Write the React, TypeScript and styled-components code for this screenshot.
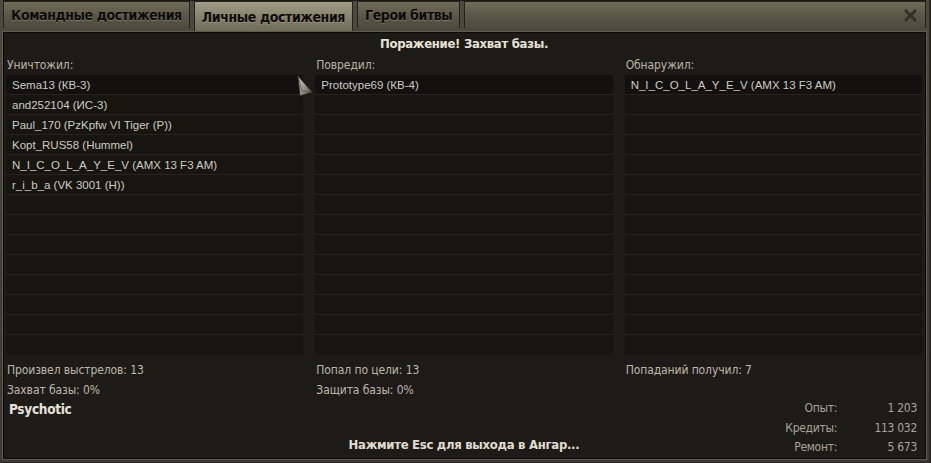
import styled, { createGlobalStyle } from "styled-components"

const GlobalStyle = createGlobalStyle`
  html, body {
    margin: 0;
    padding: 0;
    background: #1a1814;
  }
  * {
    box-sizing: border-box;
  }
`

const narrow = `"Liberation Sans Narrow", "DejaVu Sans Condensed", "Roboto Condensed", "Liberation Sans", sans-serif`

interface Column {
  title: string
  rows: string[]
  stats: string[]
}

const columns: Column[] = [
  {
    title: "Уничтожил:",
    rows: [
      "Sema13 (КВ-3)",
      "and252104 (ИС-3)",
      "Paul_170 (PzKpfw VI Tiger (P))",
      "Kopt_RUS58 (Hummel)",
      "N_I_C_O_L_A_Y_E_V (AMX 13 F3 AM)",
      "r_i_b_a (VK 3001 (H))",
    ],
    stats: ["Произвел выстрелов: 13", "Захват базы: 0%"],
  },
  {
    title: "Повредил:",
    rows: ["Prototype69 (КВ-4)"],
    stats: ["Попал по цели: 13", "Защита базы: 0%"],
  },
  {
    title: "Обнаружил:",
    rows: ["N_I_C_O_L_A_Y_E_V (AMX 13 F3 AM)"],
    stats: ["Попаданий получил: 7"],
  },
]

const totals = [
  ["Опыт:", "1 203"],
  ["Кредиты:", "113 032"],
  ["Ремонт:", "5 673"],
]

const ROW_COUNT = 14

export default function App() {
  return (
    <>
      <GlobalStyle />
      <Window>
        <TabBar>
          <Tab>Командные достижения</Tab>
          <Tab active>Личные достижения</Tab>
          <Tab>Герои битвы</Tab>
          <TabFiller>
            <CloseButton>
              <svg width="13" height="13" viewBox="0 0 13 13">
                <path
                  d="M2 2 L11 11 M11 2 L2 11"
                  stroke="#33312a"
                  strokeWidth="3"
                  strokeLinecap="square"
                />
              </svg>
            </CloseButton>
          </TabFiller>
        </TabBar>

        <Panel>
          <Title>Поражение! Захват базы.</Title>

          <Columns>
            {columns.map((col) => (
              <ColumnLabel key={col.title}>{col.title}</ColumnLabel>
            ))}
            {columns.map((col) => (
              <List key={col.title + "-list"}>
                {Array.from({ length: ROW_COUNT }).map((_, i) => (
                  <Row key={i} first={i === 0}>
                    {col.rows[i] ?? ""}
                  </Row>
                ))}
              </List>
            ))}
            {columns.map((col) => (
              <Stats key={col.title + "-stats"}>
                {col.stats.map((s) => (
                  <StatLine key={s}>{s}</StatLine>
                ))}
              </Stats>
            ))}
          </Columns>

          <Footer>
            <PlayerName>Psychotic</PlayerName>
            <EscHint>Нажмите Esc для выхода в Ангар...</EscHint>
            <Totals>
              {totals.map(([label, value]) => (
                <TotalRow key={label}>
                  <TotalLabel>{label}</TotalLabel>
                  <TotalValue>{value}</TotalValue>
                </TotalRow>
              ))}
            </Totals>
          </Footer>

          <Cursor>
            <svg width="18" height="22" viewBox="0 0 18 22">
              <defs>
                <linearGradient id="cur" x1="0" y1="0" x2="1" y2="1">
                  <stop offset="0" stopColor="#d8d6cf" />
                  <stop offset="0.6" stopColor="#8b887f" />
                  <stop offset="1" stopColor="#4b4942" />
                </linearGradient>
              </defs>
              <path d="M2 1 L16 17 L4 21 Z" fill="url(#cur)" stroke="#2a2824" strokeWidth="0.8" />
              <path d="M2 1 L6 16 L16 17" fill="none" stroke="#5a5850" strokeWidth="0.8" />
            </svg>
          </Cursor>
        </Panel>
      </Window>
    </>
  )
}

const Window = styled.div`
  width: 931px;
  height: 463px;
  display: flex;
  flex-direction: column;
  padding: 0 3px 4px 3px;
  background: linear-gradient(180deg, #4d493e 0%, #413e35 60%, #3c3a32 100%);
  border-right: 2px solid #2a2823;
  border-bottom: 1px solid #2a2823;
`

const TabBar = styled.div`
  display: flex;
  height: 28px;
  gap: 4px;
  border-top: 1px solid #1c1a15;
`

const Tab = styled.div<{ active?: boolean }>`
  display: flex;
  align-items: center;
  padding: 0 7px;
  font-family: ${narrow};
  font-weight: bold;
  font-size: 14px;
  letter-spacing: -0.4px;
  color: #0d0c0a;
  text-shadow: 0 1px 0 rgba(200, 195, 170, 0.35);
  border: 1px solid #24221c;
  border-bottom: none;
  background: ${(p) =>
    p.active
      ? "linear-gradient(180deg, #a19c86 0%, #8a8571 45%, #6f6b5a 100%)"
      : "linear-gradient(180deg, #716b58 0%, #5c5848 50%, #4d4a3e 100%)"};
  height: ${(p) => (p.active ? "30px" : "27px")};
  margin-bottom: ${(p) => (p.active ? "-3px" : "0")};
  position: relative;
  z-index: ${(p) => (p.active ? 2 : 1)};
`

const TabFiller = styled.div`
  flex: 1;
  display: flex;
  justify-content: flex-end;
  align-items: center;
  padding-right: 6px;
  border: 1px solid #24221c;
  border-bottom: none;
  background: linear-gradient(180deg, #716b58 0%, #5c5848 50%, #4d4a3e 100%);
`

const CloseButton = styled.div`
  display: flex;
  align-items: center;
  justify-content: center;
  width: 18px;
  height: 18px;
`

const Panel = styled.div`
  position: relative;
  flex: 1;
  margin-top: 4px;
  padding: 0 3px 0 2px;
  background: #1d1b17;
  border: 1px solid #0b0a08;
  box-shadow: 0 0 0 1px #5f5b4e;
  display: flex;
  flex-direction: column;
`

const Title = styled.div`
  height: 22px;
  line-height: 22px;
  text-align: center;
  font-family: ${narrow};
  font-weight: bold;
  font-size: 13px;
  letter-spacing: -0.3px;
  color: #e6e2d6;
`

const Columns = styled.div`
  display: grid;
  grid-template-columns: repeat(3, 1fr);
  column-gap: 12px;
`

const ColumnLabel = styled.div`
  height: 20px;
  line-height: 20px;
  padding-left: 1px;
  font-family: ${narrow};
  font-size: 12px;
  letter-spacing: -0.1px;
  color: #b9b4a7;
`

const List = styled.div`
  display: flex;
  flex-direction: column;
  background: #15130f;
`

const Row = styled.div<{ first?: boolean }>`
  height: 20px;
  line-height: 20px;
  padding-left: 6px;
  font-family: "Liberation Sans", Arial, sans-serif;
  font-size: 11.5px;
  color: #cfcbc2;
  white-space: nowrap;
  background: ${(p) => (p.first ? "#121110" : "#17150f")};
  border-bottom: 1px solid #27241d;
  &:last-child {
    border-bottom: none;
  }
`

const Stats = styled.div`
  display: flex;
  flex-direction: column;
  padding-top: 5px;
`

const StatLine = styled.div`
  height: 20px;
  line-height: 20px;
  padding-left: 1px;
  font-family: ${narrow};
  font-size: 12px;
  letter-spacing: -0.1px;
  color: #bdb8ab;
`

const Footer = styled.div`
  flex: 1;
  display: grid;
  grid-template-columns: 1fr auto 1fr;
  margin-top: -1px;
`

const PlayerName = styled.div`
  align-self: start;
  padding-left: 3px;
  font-family: ${narrow};
  font-weight: bold;
  font-size: 13.5px;
  letter-spacing: -0.3px;
  line-height: 20px;
  color: #e6e2d6;
`

const EscHint = styled.div`
  align-self: end;
  padding-bottom: 6px;
  font-family: ${narrow};
  font-weight: bold;
  font-size: 13px;
  letter-spacing: -0.3px;
  color: #e0dcd0;
`

const Totals = styled.div`
  justify-self: end;
  align-self: start;
  display: flex;
  flex-direction: column;
  padding-right: 5px;
`

const TotalRow = styled.div`
  display: grid;
  grid-template-columns: 80px 80px;
  height: 19.5px;
  line-height: 19.5px;
  font-family: ${narrow};
  font-size: 12px;
  letter-spacing: -0.3px;
  color: #a9a498;
`

const TotalLabel = styled.span`
  text-align: right;
`

const TotalValue = styled.span`
  text-align: right;
`

const Cursor = styled.div`
  position: absolute;
  left: 292px;
  top: 42px;
  width: 18px;
  height: 22px;
`
